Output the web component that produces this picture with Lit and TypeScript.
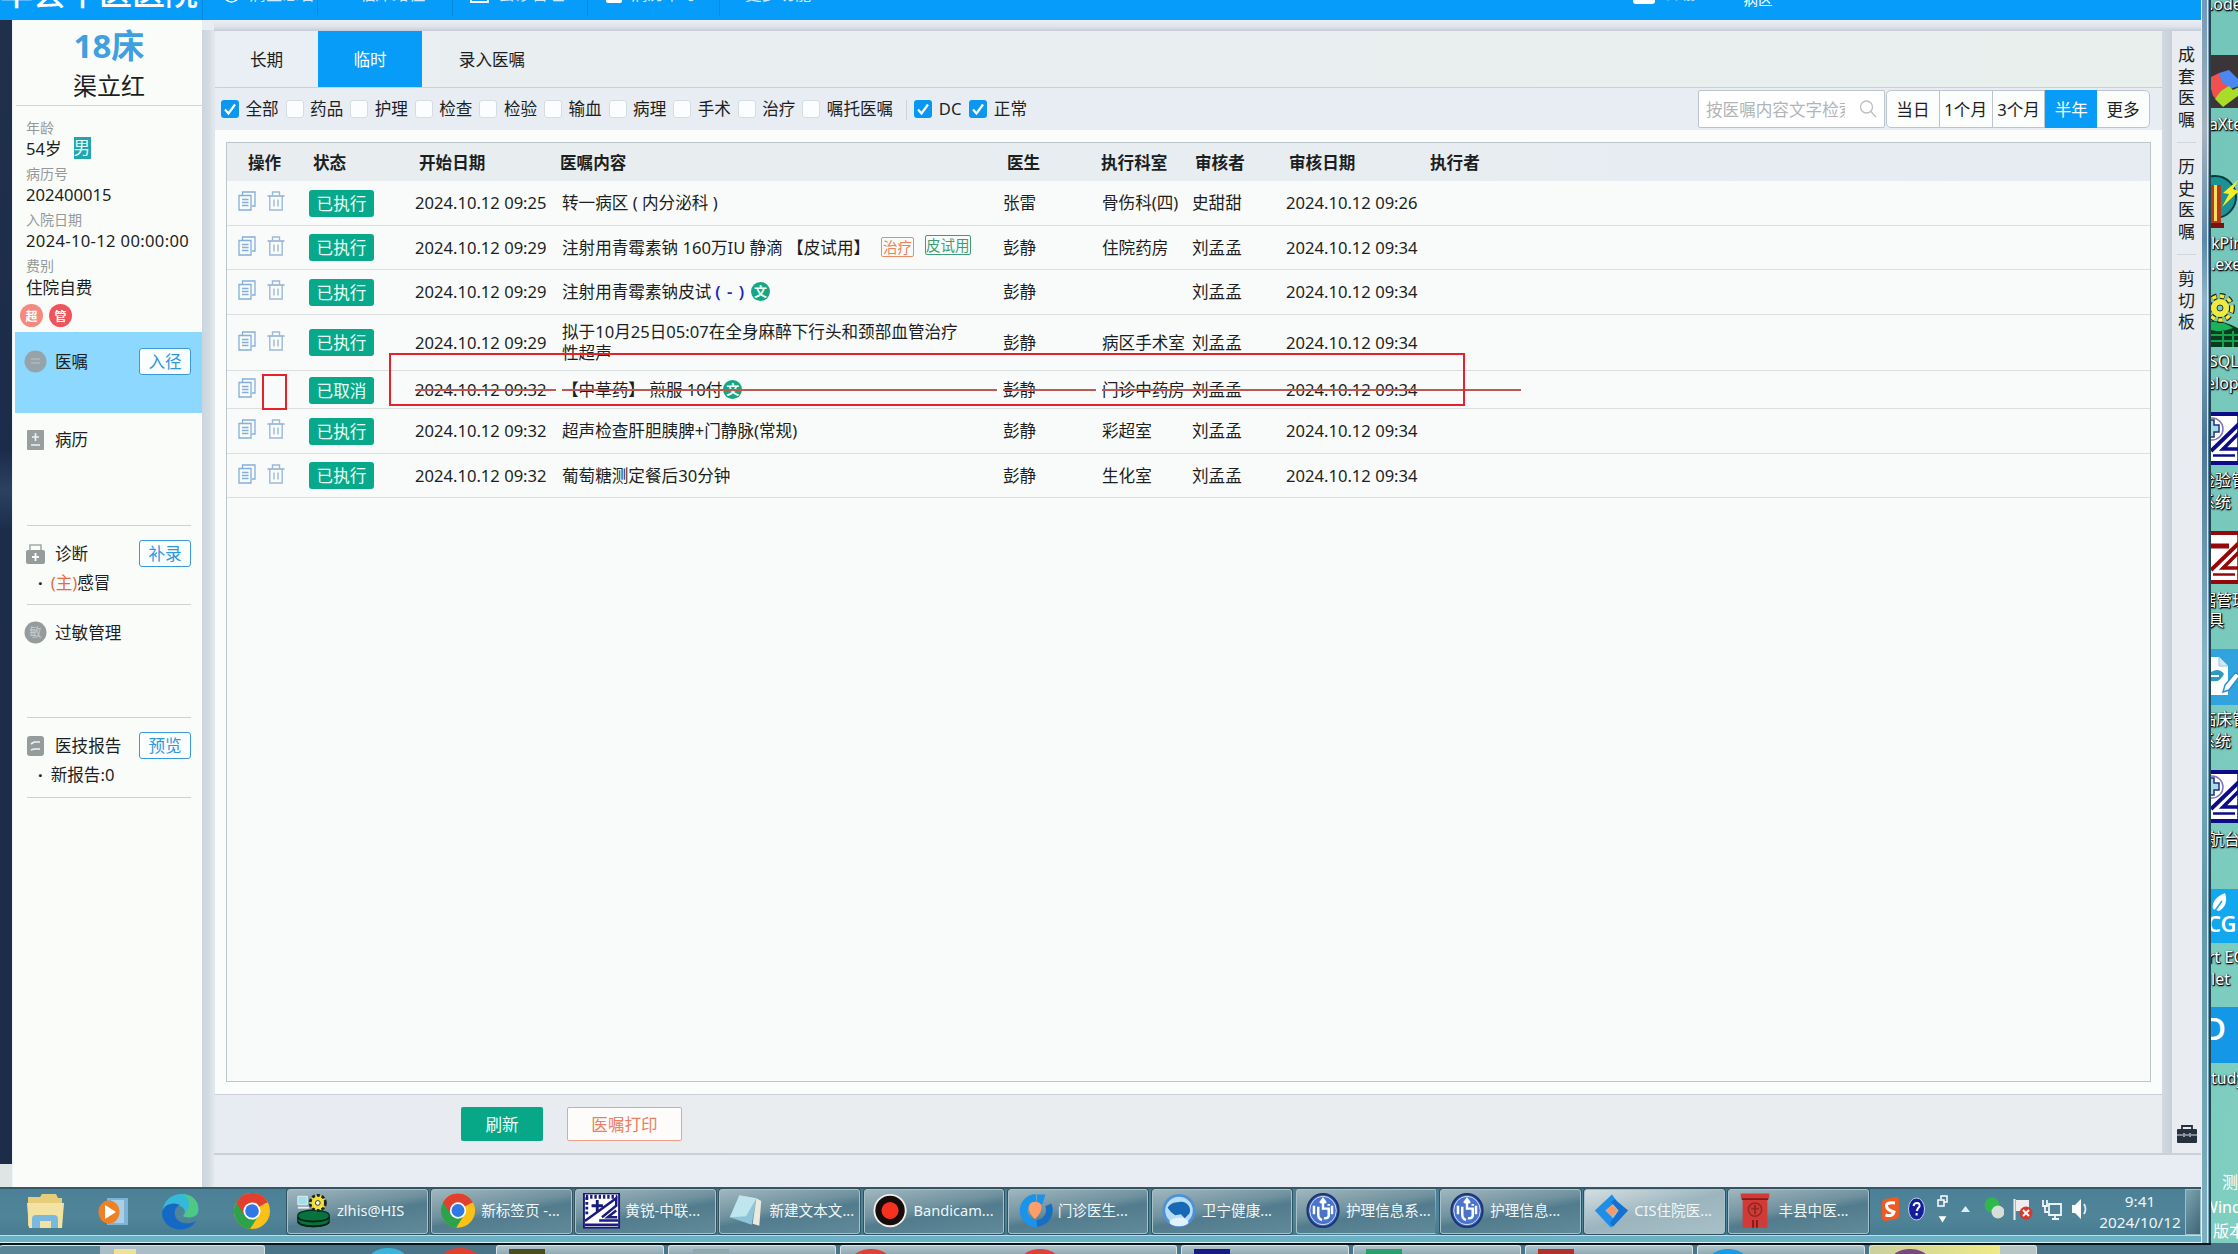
import { LitElement, html, css, svg, nothing } from "lit";
import { customElement } from "lit/decorators.js";
import { classMap } from "lit/directives/class-map.js";

type Order = {
  status: string; start: string; lines: string[]; doctor: string; dept: string;
  checker: string; checked: string; height: number;
  tags?: boolean; skin?: boolean; mark?: boolean; cancelled?: boolean;
};

const ORDERS: Order[] = [
  { status: "已执行", start: "2024.10.12 09:25", lines: ["转一病区 ( 内分泌科 )"], doctor: "张雷", dept: "骨伤科(四)", checker: "史甜甜", checked: "2024.10.12 09:26", height: 44.5 },
  { status: "已执行", start: "2024.10.12 09:29", lines: ["注射用青霉素钠 160万IU 静滴 【皮试用】"], tags: true, doctor: "彭静", dept: "住院药房", checker: "刘孟孟", checked: "2024.10.12 09:34", height: 44.5 },
  { status: "已执行", start: "2024.10.12 09:29", lines: ["注射用青霉素钠皮试"], skin: true, mark: true, doctor: "彭静", dept: "", checker: "刘孟孟", checked: "2024.10.12 09:34", height: 44.5 },
  { status: "已执行", start: "2024.10.12 09:29", lines: ["拟于10月25日05:07在全身麻醉下行头和颈部血管治疗", "性超声"], doctor: "彭静", dept: "病区手术室", checker: "刘孟孟", checked: "2024.10.12 09:34", height: 56.5 },
  { status: "已取消", start: "2024.10.12 09:32", lines: ["【中草药】 煎服 10付"], mark: true, cancelled: true, doctor: "彭静", dept: "门诊中药房", checker: "刘孟孟", checked: "2024.10.12 09:34", height: 38 },
  { status: "已执行", start: "2024.10.12 09:32", lines: ["超声检查肝胆胰脾+门静脉(常规)"], doctor: "彭静", dept: "彩超室", checker: "刘孟孟", checked: "2024.10.12 09:34", height: 44.5 },
  { status: "已执行", start: "2024.10.12 09:32", lines: ["葡萄糖测定餐后30分钟"], doctor: "彭静", dept: "生化室", checker: "刘孟孟", checked: "2024.10.12 09:34", height: 44.5 },
];

const chrome = svg`<circle cx="20" cy="18" r="18" fill="#fbc116"/>
  <path d="M20 18 L4.4 9 A18 18 0 0 1 35.6 9 Z" fill="#e2402f"/><path d="M4.4 9 A18 18 0 0 0 18 36 L27 22 L20 18Z" fill="#2ba24c"/><path d="M4.4 9 L12 22 L20 10 H35.6 A18 18 0 0 0 4.4 9Z" fill="#e2402f"/>
  <circle cx="20" cy="18" r="8.6" fill="#fff"/><circle cx="20" cy="18" r="6.8" fill="#2f78e6"/>`;
const zl = svg`<rect x="1" y="0" width="37" height="36" fill="#fff" stroke="#1a1a80" stroke-width="2"/>
  <path d="M3 3.500H36" stroke="#1a1a80" stroke-width="4" stroke-dasharray="2.500 2"/><path d="M4 4V22" stroke="#1a1a80" stroke-width="3" stroke-dasharray="3 2"/>
  <path d="M2 29 35 5V13L20 25M35 18 26 25H36M17 28.500H37M2 33H37" fill="none" stroke="#1a1a80" stroke-width="2.600"/>
  <path d="M15 7V19M9 13H21" stroke="#1a1a80" stroke-width="3"/>`;
const nurse = svg`<ellipse cx="20" cy="18" rx="16.5" ry="17.5" fill="#2f55b5" stroke="#1c3570" stroke-width="2"/><ellipse cx="20" cy="18" rx="14" ry="15" fill="#4a74cc" stroke="#dde8fa" stroke-width="1"/>
  <path d="M20 7V16H26V24Q25 27 21 26M17 10 20 6 23 10M15 14V22Q15 27 19 28M10.500 13V22M29.500 13V22M26 11V13" fill="none" stroke="#fff" stroke-width="2.600"/>`;
const gears = svg`<path d="M3 3h10v9H3z" fill="#9fe0ee" stroke="#eee"/><path d="M3 15h12" stroke="#eee" stroke-width="2"/>
  <path d="M3 23c0-7 33-7 33 0v6c0 8-33 8-33 0z" fill="#07743f" stroke="#032" stroke-width="1.4"/><path d="M3 25c3 6 30 6 33 0M3 30c3 6 30 6 33 0" fill="none" stroke="#021" stroke-width="2"/>
  <circle cx="24" cy="10" r="8" fill="#efe13a" stroke="#222" stroke-width="3" stroke-dasharray="3.2 2"/><circle cx="24" cy="10" r="6.5" fill="#efe13a"/><circle cx="24" cy="10" r="2.5" fill="#fff" stroke="#332"/>`;

const TASKS = [
  { text: "zlhis@HIS", icon: gears },
  { text: "新标签页 -...", icon: chrome },
  { text: "黄锐-中联...", icon: zl },
  { text: "新建文本文...", icon: svg`<path d="M13 2 31 5 26 33 3 25Z" fill="#8cc6d8"/><path d="M13 2 31 5 20 24 3 25Z" fill="#bfe6ee"/><path d="M31 5 36 8 34 34 27 32Z" fill="#eceade"/>` },
  { text: "Bandicam...", icon: svg`<circle cx="19" cy="18" r="17.5" fill="#f3eeea"/><circle cx="19" cy="18" r="15.5" fill="#150c0b"/><circle cx="19" cy="18" r="9" fill="#f5321f"/>` },
  { text: "门诊医生...", icon: svg`<path d="M21 4.500A13.500 13.500 0 1 0 22 31.500" fill="none" stroke="#1a93ea" stroke-width="8"/><path d="M34 12A14 14 0 0 1 22 31.500" fill="none" stroke="#166fc4" stroke-width="7"/><path d="M22 1H31L28 11H22Z" fill="#1a93ea"/><path d="M20 9c9-1 9 10 0 18-9-8-8-19 0-18z" fill="#ff9d6b"/>` },
  { text: "卫宁健康...", icon: svg`<circle cx="20" cy="18" r="17.5" fill="#4e91d6"/><circle cx="20" cy="18" r="14.5" fill="#b7dcf6"/><path d="M8 15c5-7 9-5 12-6 7-2 14 5 11 12l-5 5-4-4-6 1-4-3z" fill="#1768b5"/><ellipse cx="20" cy="30" rx="10" ry="4.5" fill="#e2f2fd"/>` },
  { text: "护理信息系...", icon: nurse },
  { text: "护理信息...", icon: nurse },
  { text: "CIS住院医...", icon: svg`<path d="M21 1 26 8 14 18 25 29 20 36 3 18Z" fill="#1e8ee8"/><path d="M24 6 38 18 22 35 19 31 28 18 20 9Z" fill="#1371cf"/><path d="M21 12 27 18 21 24 15 18Z" fill="#f69a6a"/>`, on: true },
  { text: "丰县中医...", icon: svg`<path d="M5 0H35V5H33V36H26V27H14V36H7V5H5Z" fill="#d33a36"/><path d="M14 27H26V36H14Z" fill="#d33a36"/><path d="M6 6H34M18 28V36M22 28V36" stroke="#7e1c1c" stroke-width="2"/><circle cx="20" cy="17" r="7" fill="none" stroke="#8d2a28" stroke-width="1.6"/><path d="M20 12V22M16 16H24" stroke="#8d2a28" stroke-width="2"/>` },
];

const copyIcon = html`<svg class="ico" width="18" height="20" viewBox="0 0 18 20" fill="none" stroke="#84aedb" stroke-width="1.3"><path d="M4.5 4V1H17V15H14"/><path d="M1 4.5H13V19H1Z"/><path d="M4 8.5H10.5M4 11.5H10.5M4 14.5H10.5" stroke-width="1.5"/></svg>`;
const trashIcon = html`<svg class="ico" width="18" height="20" viewBox="0 0 18 20" fill="none" stroke="#9db9d6" stroke-width="1.4"><path d="M0.5 5H17.5" stroke-width="1.8"/><path d="M5.5 4.5V1H12.5V4.5M2.8 5V19H15.2V5M7 8.5V15.5M11 8.5V15.5"/></svg>`;

@customElement("app-root")
export class AppRoot extends LitElement {
  static styles = css`
    :host { display: block; }
    * { box-sizing: border-box; }
    svg { display: block; flex: none; }
    .screen { position: relative; display: flex; flex-direction: column; width: 2238px; height: 1254px; overflow: hidden; background: #78cbbe;
      font-family: "Noto Sans", "Noto Sans CJK SC", sans-serif; font-size: 16.6px; line-height: 21px; color: #1b1f22; white-space: nowrap; }
    .main { display: flex; height: 1243px; flex: none; }
    .window { width: 2201px; display: flex; flex-direction: column; }
    .edge { width: 10px; height: 1243px; border-left: 1px solid #e9f3f6; border-right: 2px solid #24464f; background: linear-gradient(#7198b8, #a5b3bd 130px, #5c88aa 240px, #8fb4cb 300px, #4d7597 440px, #89b4c9 660px, #6297ac 900px, #7faebf); }
    .edge i { display: block; margin: 0 1px 0 auto; width: 1px; height: 100%; background: #d2edf4; }

    .top { height: 20px; flex: none; overflow: hidden; display: flex; background: #059cfa; color: #fff; }
    .brand { width: 203px; border-right: 1px solid #0788dd; font-size: 33px; line-height: 40px; margin-top: -27px; height: 47px; font-weight: 500; }
    .nav { height: 16px; border-right: 1px solid #0788dd; display: flex; gap: 9px; padding-left: 20px; line-height: 22px; }
    .nav span { margin-top: -17px; opacity: .8; }
    .nav svg { margin-top: -14px; }
    .account { margin-left: auto; width: 568px; display: flex; }
    .account .card { width: 22px; height: 16px; margin: -12px 11px 0 0; background: #fff; border-radius: 3px; }
    .account .who { width: 63px; margin-top: -18px; opacity: .7; }
    .account .ward { margin-top: -10px; font-size: 14.5px; line-height: 19px; width: 190px; }
    .account .dim { margin-top: -19px; letter-spacing: 28px; opacity: .5; }

    .body { flex: 1; min-height: 0; display: flex; background: #e7edf3; }
    .behind { width: 12px; background: linear-gradient(#20304a, #1b2c4a 430px, #2a4260 470px, #1c2d4a 510px, #1c2c49 1144px, #dfe5e4 1144px); }
    .side { width: 190px; background: #fafcfa; border-left: 1px solid #eef3f3; display: flex; flex-direction: column; }
    .bed { height: 86px; border-bottom: 1px solid #cfd6d6; margin-left: 3px; text-align: center; }
    .bed b { display: block; font-size: 33px; line-height: 40px; margin-top: 6px; color: #3f9fdf; }
    .bed span { font-size: 24px; line-height: 31px; margin-top: 4px; display: block; }
    .facts { height: 226px; padding: 12px 0 0 13px; }
    .facts .k { font-size: 14px; height: 20px; line-height: 20px; color: #95999b; }
    .facts .v { height: 26px; line-height: 21px; display: flex; gap: 12px; }
    .facts .t { letter-spacing: .33px; }
    .facts .pay { height: 28px; line-height: 23px; }
    .facts .sex { width: 17px; height: 22px; line-height: 22px; background: #22a5ae; color: #e7ffff; margin-top: -1px; }
    .marks { display: flex; gap: 6px; margin: 0 0 0 -6px; }
    .marks i { width: 23px; height: 23px; border-radius: 50%; background: #f4897f; color: #fff; font: bold 12px/23px "Noto Sans CJK SC", sans-serif; text-align: center; }
    .marks i + i { background: #ee5459; }
    .item { padding: 16px 0 0 12px; margin-left: 2px; flex: none; }
    .item.on { background: #8dd8fe; height: 81px; }
    .rec { height: 113px; } .dia { height: 79px; } .alg { height: 113px; } .rep { height: 80px; }
    .item .row { display: flex; align-items: center; height: 27px; }
    .item .row span { flex: 1; }
    .item .row svg { margin-right: 8px; margin-left: -3px; }
    .item.ln { display: flex; flex-direction: column; padding-bottom: 0; }
    .item.ln .rule { height: 1px; background: #cdd1d1; margin: auto 11px 0 0; }
    .item.rec { padding-top: 14px; }
    .item.dia, .item.alg, .item.rep { padding-top: 14px; }
    .mini { width: 52px; height: 27px; margin-right: 11px; border: 1.5px solid #3a9ad8; border-radius: 3px; background: #fbfeff; color: #2f97dc; text-align: center; line-height: 25px; }
    .sub { padding-left: 11px; margin-top: 5px; height: 21px; display: flex; gap: 8px; }
    .sub em { font-style: normal; color: #ea6a3e; }

    .gutter { width: 12px; background: linear-gradient(90deg, #c9d5de, #d4dce3 60%, #e3e8ed); margin-top: 10px; height: 1157px; }
    .work { flex: 1; min-width: 0; display: flex; flex-direction: column; }
    .shade { height: 11px; background: linear-gradient(#ebeef2, #dfe3eb 60%, #c5ccd8); }
    .cols { display: flex; height: 1124px; border-bottom: 2px solid #c8d0d9; }
    .panel { width: 1948px; display: flex; flex-direction: column; background: #fafdfc; border-left: 1px solid #dfe6ec; }
    .tabs { height: 57px; display: flex; background: linear-gradient(90deg, #e9eff6, #e9eef1 240px, #e8efed); border-bottom: 1px solid #c2d2de; line-height: 57px; text-align: center; }
    .tabs div { width: 103px; }
    .tabs .on { width: 104px; background: #069cf8; color: #fff; }
    .tabs .add { width: 140px; }
    .filters { height: 42px; display: flex; align-items: flex-start; background: #e8edf4; padding: 2px 12px 0 6px; }
    .ck { display: flex; gap: 6.5px; width: 64.6px; padding-top: 10px; line-height: 18px; }
    .ck i, .ck svg { width: 18px; height: 18px; border-radius: 3px; background: #fbfdfe; border: 1px solid #d5dde2; flex: none; }
    .ck svg { background: #0a97f2; border: 0; }
    .ck.long { width: 105px; }
    .ck.dc { width: 55px; }
    .bar { width: 1px; height: 20px; margin: 10px 7px 0 -1px; background: #cbd3da; }
    .find { margin-left: auto; width: 187px; height: 38px; border: 1px solid #bcc5cb; border-radius: 2px; background: #fff; display: flex; align-items: center; padding: 0 7px; gap: 14px; color: #b1b5b8; }
    .find span { width: 140px; overflow: hidden; }
    .range { display: flex; height: 38px; margin-left: 1px; border: 1px solid #bcc5cb; border-radius: 5px; background: #fcfdfd; line-height: 37px; text-align: center; width: 264px; }
    .range div { flex: 1; border-right: 1px solid #bcc5cb; }
    .range .on { background: #069cf8; color: #fff; margin: -1px 0; line-height: 39px; border: 0; }
    .range div:last-child { border: 0; }

    .table { margin: 12px 11px 12px 11px; flex: 1; min-height: 0; border: 1px solid #bcc7c9; background: #f9fbfa; }
    .tr { display: grid; grid-template-columns: 82px 106px 147px 441px 99px 90px 94px 235px 1fr; border-bottom: 1px solid #dadfe0; align-items: center; }
    .head { height: 38px; background: linear-gradient(90deg, #e9edf0, #e8edf1 50%, #e7ecf3); font-weight: 700; border: 0; }
    .head > div { padding-left: 3px; }
    .head > div:nth-child(1) { padding-left: 21px; }
    .head > div:nth-child(2) { padding-left: 4px; }
    .head > div:nth-child(3) { padding-left: 4px; }
    .head > div:nth-child(4) { padding-left: 0; margin-left: -2px; }
    .head > div:nth-child(6) { margin-left: -4px; }
    .head > div:nth-child(5) { padding-left: 4px; }
    .ops { display: flex; gap: 11px; padding-left: 11px; margin-top: -3px; }
    .st { width: 65px; height: 27px; border-radius: 3px; background: #08a98a; color: #eafff8; text-align: center; line-height: 27px; margin-top: 1px; }
    .cell { position: relative; line-height: 21.5px; }
    .content { display: flex; align-items: center; }
    .strike::after { content: ""; position: absolute; left: 0; right: 6px; top: 10px; height: 2px; background: #bf5752; }
    .strike.flush::after { right: 0; }
    .tag { font-size: 14.5px; line-height: 18px; height: 20px; border: 1px solid #ec8a68; color: #ec8058; border-radius: 2px; margin-left: 11px; padding: 0 1px; margin-top: -1px; }
    .tag.green { border-color: #3f9c76; color: #3f9c76; margin-left: 11px; margin-top: -4px; padding: 0; }
    .neg { color: #1d23c8; font-weight: 600; margin: 0 6px 0 4px; word-spacing: 2px; }
    .wen { width: 19px; height: 19px; border-radius: 50%; background: #17a583; color: #eafff8; font: bold 13px/18px "Noto Sans CJK SC", sans-serif; text-align: center; margin-left: 1px; }
    .foot { height: 59px; border-top: 1px solid #cbd1d6; background: linear-gradient(90deg, #e7ebf2, #e9edef 30%, #eaedef); display: flex; padding: 12px 0 0 246px; gap: 24px; text-align: center; }
    .btn { width: 82px; height: 34px; border-radius: 2px; background: #06a888; color: #f0fffa; line-height: 35px; }
    .btn.line { width: 115px; background: #fdfcfa; border: 1.5px solid #efa18c; color: #ea7f62; line-height: 33px; }
    .gut2 { width: 10px; background: linear-gradient(90deg, #d3d9e0, #c8cfd9); }
    .rail { width: 29px; background: #e9edf1; display: flex; flex-direction: column; align-items: center; font-size: 17px; }
    .rail div { width: 19px; white-space: normal; line-height: 21.7px; padding: 13px 1px 12px; text-align: center; height: 112px; border-bottom: 1px solid #d0d7dd; word-break: break-all; }
    .rail div:nth-child(3) { border: 0; }
    .rail svg { margin: auto 0 10px; }

    .tasks { height: 48px; flex: none; display: flex; border-top: 2px solid #355866; background: linear-gradient(#4c8097, #4f8499 60%, #467b90); color: #eef6f8; }
    .quick { width: 287px; flex: none; display: flex; align-items: center; padding: 0 16px 2px 26px; justify-content: space-between; }
    .task { width: 140.5px; flex: none; height: 45px; margin-right: 3.65px; display: flex; align-items: center; gap: 4px; padding-left: 7px; border: 1px solid #a7c1ca; border-radius: 3px; box-shadow: 0 0 0 1px #32525f; background: linear-gradient(170deg, #a0b6be, #6f919e 42%, #527c8d 55%, #61899a); font-size: 14.6px; padding-bottom: 2px; }
    .task svg { width: 38px; height: 36px; }
    .task.join { border-right-color: transparent; box-shadow: none; border-radius: 3px 0 0 3px; }
    .task.on { background: linear-gradient(165deg, #d3dfe2, #9bb4bd 50%, #a8c1c8); }
    .tray { display: flex; align-items: center; flex: 1; min-width: 0; padding: 0 0 6px 9px; gap: 9px; font-size: 15.3px; }
    .clock { margin-left: auto; width: 86px; text-align: center; line-height: 21px; padding-top: 6px; }
    .show { width: 16px; height: 46px; margin: 5px 0 0 -7px; border: 1px solid #9dbcc6; background: linear-gradient(120deg, #7ea4b1, #3c6577); }
    .rim { height: 8px; flex: none; background: #6bb0c3; border-top: 1px solid #bfdee5; border-bottom: 1px solid #d9f0f5; }

    .under { height: 11px; flex: none; display: flex; border-top: 2px solid #08151a; background: #4a7488; overflow: hidden; gap: 4px; }
    .under div { width: 168px; flex: none; background: linear-gradient(#b1c4ca, #8faab4); border: 1px solid #d5e2e6; border-bottom: 0; border-radius: 3px 3px 0 0; padding: 3px 0 0 12px; }
    .under div i { display: block; width: 36px; height: 20px; border-radius: 50% 50% 0 0; }
    .under .first { width: 265px; background: linear-gradient(90deg, #5a8597 100px, #a9bec6 100px); border-left: 0; padding-left: 114px; }
    .under .plain { width: 223px; background: none; border: 0; display: flex; gap: 36px; padding-left: 101px; }
    .under .wide { width: 337px; display: flex; gap: 133px; }
    .under .sq i { border-radius: 0; }
    .under .yel { background: linear-gradient(90deg, #c9cf9e, #eeea86 130px, #b9c6c6 130px); }

    .desk { position: absolute; left: 2211px; top: 0; width: 27px; height: 1254px; overflow: hidden; color: #fff; text-shadow: 1px 1px 1px #000, 0 1px 2px #000, 1px 0 1px #234; font-size: 16px; background: linear-gradient(100deg, #72c5b9, #80cfc1); border-bottom: 11px solid #4a7488; }
    .desk span, .desk svg { position: absolute; left: 0; }
    .desk .soft { text-shadow: none; }
    .hint { position: absolute; border: 2px solid #e8202a; }
    .hint.a { left: 389px; top: 353px; width: 1076px; height: 53px; }
    .hint.b { left: 262px; top: 374px; width: 25px; height: 36px; }
  `;

  private row(o: Order) {
    const cls = (flush = false) => classMap({ cell: true, strike: !!o.cancelled, flush });
    return html`<div class="tr" style="height:${o.height}px">
      <div class="ops">${copyIcon}${o.cancelled ? nothing : trashIcon}</div>
      <div><div class="st">${o.status}</div></div>
      <div class=${cls()}>${o.start}</div>
      <div class=${cls()}><div class="content"><div>${o.lines.map((l) => html`<div>${l}</div>`)}</div>
        ${o.tags ? html`<div class="tag">治疗</div><div class="tag green">皮试用</div>` : nothing}
        ${o.skin ? html`<span class="neg">( - )</span>` : nothing}
        ${o.mark ? html`<div class="wen">文</div>` : nothing}</div></div>
      <div class=${cls()}>${o.doctor}</div>
      <div class=${cls(true)}>${o.dept || "\u00a0"}</div>
      <div class=${cls(true)}>${o.checker}</div>
      <div class=${cls(true)}>${o.checked}</div>
      <div></div>
    </div>`;
  }

  private check(text: string, on = false, extra = "") {
    return html`<div class="ck ${extra}">${on
      ? html`<svg viewBox="0 0 18 18" fill="none"><path d="M4 9.5 7.5 13.5 14 4.5" stroke="#fff" stroke-width="2.2"/></svg>`
      : html`<i></i>`}<span>${text}</span></div>`;
  }

  private label(y: number, text: string, x = 0, soft = false) {
    return html`<span class=${soft ? "soft" : ""} style="top:${y - 11}px;left:${x}px">${text}</span>`;
  }

  private zicon(y: number, c: string, plus: boolean) {
    return html`<svg style="top:${y}px" width="28" height="53" viewBox="0 0 28 53"><rect width="28" height="53" fill="#fff"/><path d="M0 2H28M0 51H28" stroke=${c} stroke-width="4"/><path d="M27 0V53" stroke=${c} stroke-width="1.5"/>
      <path d="M0 39 28 12" stroke=${c} stroke-width="4"/><path d="M28 21 12 37H28" fill="none" stroke=${c} stroke-width="3.500"/><path d="M2 43.500H24" stroke=${c} stroke-width="2.500"/>
      ${plus ? svg`<circle cx="1" cy="17" r="11" fill="#fff" stroke="#7c78b8" stroke-width="1.5"/><path d="M0 8H3V13H8V20H3V25H0" fill="#a4dce8" stroke="#203080" stroke-width="1.5"/>` : svg`<path d="M0 15H18" stroke=${c} stroke-width="5"/>`}</svg>`;
  }

  render() {
    return html`<div class="screen">
      <div class="main">
        <div class="window">
          <div class="top">
            <div class="brand">丰县中医医院</div>
            <div class="nav" style="width:115px"><svg width="17" height="17" viewBox="0 0 17 17" fill="none" stroke="#fff" stroke-width="1.6"><circle cx="8.5" cy="8.5" r="7.5"/></svg><span>病区患者</span></div>
            <div class="nav" style="width:135px"><span>＋ 临床路径</span></div>
            <div class="nav" style="width:135px;padding-left:17px"><svg width="19" height="17" viewBox="0 0 19 17" fill="none" stroke="#fff" stroke-width="1.8"><path d="M1 1H18V16H1ZM5 7H14M5 11H14"/></svg><span>会诊管理</span></div>
            <div class="nav" style="width:132px;padding-left:18px"><svg width="16" height="17" viewBox="0 0 16 17"><rect width="16" height="17" rx="2" fill="#fff"/></svg><span>病历书写</span></div>
            <div class="nav" style="border:0;padding-left:25px"><span>更多功能</span></div>
            <div class="account"><div class="card"></div><div class="who">彭静</div><div class="ward">一病区</div><div class="dim">设置消息退出</div></div>
          </div>

          <div class="body">
            <div class="behind"></div>
            <div class="side">
              <div class="bed"><b>18床</b><span>渠立红</span></div>
              <div class="facts">
                <div class="k">年龄</div><div class="v">54岁<span class="sex">男</span></div>
                <div class="k">病历号</div><div class="v">202400015</div>
                <div class="k">入院日期</div><div class="v t">2024-10-12 00:00:00</div>
                <div class="k">费别</div><div class="v pay">住院自费</div>
                <div class="marks"><i>超</i><i>管</i></div>
              </div>
              <div class="item on"><div class="row"><svg width="23" height="23" viewBox="0 0 23 23"><circle cx="11.5" cy="11.5" r="11" fill="#96a3a8"/><path d="M7 9H16M7 13H16" stroke="#a9b4b8" stroke-width="2"/></svg><span>医嘱</span><div class="mini">入径</div></div></div>
              <div class="item rec ln"><div class="row" style="margin-top:-1px"><svg width="23" height="20" viewBox="0 0 23 20"><rect x="3" width="17" height="20" rx="1" fill="#999f9f"/><path d="M11.5 3V11M8 7H15M7 15H16" stroke="#f0f2f2" stroke-width="1.6"/></svg><span>病历</span></div><div class="rule"></div></div>
              <div class="item dia ln"><div class="row"><svg width="23" height="20" viewBox="0 0 23 20"><path d="M6 6V1H17V6" fill="none" stroke="#a5aaaa" stroke-width="1.6"/><rect x="2" y="6" width="19" height="14" rx="2" fill="#969c9c"/><path d="M11.5 9V17M8 13H15" stroke="#fff" stroke-width="1.8"/></svg><span>诊断</span><div class="mini">补录</div></div><div class="sub"><b>·</b><div><em>(主)</em>感冒</div></div><div class="rule"></div></div>
              <div class="item alg ln"><div class="row"><svg width="23" height="23" viewBox="0 0 23 23"><circle cx="11.5" cy="11.5" r="11" fill="#969c9c"/><text x="5.5" y="15.5" font-size="12" fill="#c9cdcd">敏</text></svg><span>过敏管理</span></div><div class="rule"></div></div>
              <div class="item rep ln"><div class="row"><svg width="23" height="20" viewBox="0 0 23 20"><rect x="3" width="17" height="20" rx="3" fill="#969c9c"/><path d="M7 8 10 6 16 6M7 14 10 13 16 13" stroke="#f0f2f2" stroke-width="1.6" fill="none"/></svg><span>医技报告</span><div class="mini">预览</div></div><div class="sub"><b>·</b><div>新报告:0</div></div><div class="rule"></div></div>
            </div>
            <div class="gutter"></div>
            <div class="work">
              <div class="shade"></div>
              <div class="cols">
                <div class="panel">
                  <div class="tabs"><div>长期</div><div class="on">临时</div><div class="add">录入医嘱</div></div>
                  <div class="filters">
                    ${this.check("全部", true)}${["药品", "护理", "检查", "检验", "输血", "病理", "手术", "治疗"].map((t) => this.check(t))}
                    ${this.check("嘱托医嘱", false, "long")}<div class="bar"></div>${this.check("DC", true, "dc")}${this.check("正常", true)}
                    <div class="find"><span>按医嘱内容文字检索</span><svg width="18" height="18" viewBox="0 0 18 18" fill="none" stroke="#b9bfc3" stroke-width="1.3"><circle cx="7.5" cy="7" r="6"/><path d="M11.8 11.5 17 17"/></svg></div>
                    <div class="range"><div>当日</div><div>1个月</div><div>3个月</div><div class="on">半年</div><div>更多</div></div>
                  </div>
                  <div class="table">
                    <div class="tr head">${["操作", "状态", "开始日期", "医嘱内容", "医生", "执行科室", "审核者", "审核日期"].map((t) => html`<div>${t}</div>`)}<div style="margin-left:-94px">执行者</div></div>
                    ${ORDERS.map((o) => this.row(o))}
                  </div>
                  <div class="foot"><div class="btn">刷新</div><div class="btn line">医嘱打印</div></div>
                </div>
                <div class="gut2"></div>
                <div class="rail"><div>成套医嘱</div><div>历史医嘱</div><div>剪切板</div>
                  <svg width="20" height="18" viewBox="0 0 20 18"><path d="M5 5V1H15V5" fill="none" stroke="#27313d" stroke-width="1.8"/><rect y="4" width="20" height="14" rx="1" fill="#27313d"/><path d="M0 10H6M8 10H12M14 10H20M7 8V12M13 8V12" stroke="#d9e0e6" stroke-width="1.2"/></svg></div>
              </div>
            </div>
          </div>

          <div class="tasks">
            <div class="quick">
              <svg width="39" height="35" viewBox="0 0 39 35"><path d="M2 3H14L16 0H30L32 4H36V32H2Z" fill="#e6cd7a"/><path d="M1 9H38L36 34H3Z" fill="#f3e3a3"/><path d="M6 34V25Q6 21 10 21H28Q32 21 32 25V34H25V27H14V34Z" fill="#79b9e0"/></svg>
              <svg width="31" height="27" viewBox="0 0 31 27"><rect x="9" width="21" height="27" fill="#7db3d6"/><rect x="13" y="2" width="13" height="23" fill="#a9d0e8"/><ellipse cx="11" cy="14" rx="10.5" ry="11.5" fill="#ee8124"/><path d="M7 7 18 14 7 21Z" fill="#fff"/></svg>
              <svg width="38" height="37" viewBox="0 0 38 37"><path d="M2 22C0 5 15 0 22 1 32 2 39 9 37 19 36 24 28 26 22 23 27 17 21 12 14 13 8 14 3 19 2 22Z" fill="#35b9d8"/><path d="M22 1C32 2 39 9 37 19 36 24 28 26 22 23 30 16 30 6 22 1Z" fill="#4ec983"/><path d="M1 20C2 12 11 8 19 12 12 14 11 27 22 30 27 31 32 30 35 28 31 35 22 38 15 36 6 34 1 27 1 20Z" fill="#1469c4"/></svg>
              <svg width="39" height="37" viewBox="0 0 39 37">${chrome}</svg>
            </div>
            ${TASKS.map((t, i) => html`<div class="task ${classMap({ on: !!t.on, join: i === 7 })}"><svg viewBox="0 0 40 37">${t.icon}</svg><span>${t.text}</span></div>`)}
            <div class="tray">
              <svg width="17" height="24" viewBox="0 0 17 24"><path d="M3 2 14 0Q17 0 17 4V18Q17 21 14 22L4 24Q0 24 0 20V6Q0 3 3 2Z" fill="#ee5a22"/><path d="M13 6Q4 5 4.500 9T12 15Q11 20 3.500 18" fill="none" stroke="#fff" stroke-width="3"/></svg>
              <svg width="17" height="24" viewBox="0 0 17 24"><ellipse cx="8.500" cy="12" rx="8" ry="11" fill="#141c9a" stroke="#c3cfef"/><path d="M5.500 9Q6 6 9 6T11.500 9.500Q9 12 8.700 14M8.600 16V18.500" fill="none" stroke="#fff" stroke-width="2"/></svg>
              <svg width="18" height="34" viewBox="0 0 18 34" fill="none" stroke="#fff" stroke-width="1.500"><path d="M4 8H10V14H4ZM7 7V4H13V10H10"/><path d="M6 25H11L8.500 29Z" fill="#fff"/></svg>
              <svg width="14" height="10" viewBox="0 0 14 10"><path d="M0 8 4.500 2 9 8Z" fill="#d7f0fa"/></svg>
              <svg width="20" height="24" viewBox="0 0 20 24"><circle cx="8" cy="8" r="7.500" fill="#30b84e"/><circle cx="14" cy="15" r="6.500" fill="#d7ded8"/></svg>
              <svg width="20" height="24" viewBox="0 0 20 24"><path d="M1.500 2V23" stroke="#eee" stroke-width="2"/><path d="M3 3H16V14H3Z" fill="#eee"/><circle cx="13" cy="16" r="6.500" fill="#d8382c"/><path d="M10 13 16 19M16 13 10 19" stroke="#fff" stroke-width="2"/></svg>
              <svg width="20" height="24" viewBox="0 0 20 24" fill="none" stroke="#eef5f7" stroke-width="1.800"><path d="M7 7H19V18H7ZM10 22H17M13 18V22M1 3V9H5V3M3 9V15H7"/></svg>
              <svg width="17" height="24" viewBox="0 0 17 24"><path d="M1 8H4L10 2V22L4 16H1Z" fill="#fff"/><path d="M13 7Q16 12 13 17" fill="none" stroke="#dfeef3" stroke-width="1.800"/></svg>
              <div class="clock">9:41<br />2024/10/12</div><div class="show"></div>
            </div>
          </div>
          <div class="rim"></div>
        </div>
        <div class="edge"><i></i></div>
      </div>
      <div class="under">
        <div class="first sq"><i style="background:#efe39a;width:22px"></i></div><div class="plain"><i style="background:#39b5dc"></i><i style="background:#e2402f"></i></div>
        <div class="sq"><i style="background:#4b4d20"></i></div><div class="sq"><i style="background:#8ea8ad;margin-left:12px"></i></div>
        <div class="wide"><i style="background:#e0403a"></i><i style="background:#e0403a"></i></div>
        <div class="sq"><i style="background:#151a86"></i></div><div class="sq"><i style="background:#2ca06c"></i></div><div class="sq"><i style="background:#b0302f"></i></div>
        <div><i style="background:#1d9ae2"></i></div><div class="yel"><i style="background:#7c4682;margin-left:10px"></i></div>
      </div>

      <div class="desk">
        ${this.label(5, ".ode", -2)}
        <svg style="top:55px" width="28" height="53" viewBox="0 0 28 53"><rect width="28" height="53" fill="#3c3538"/><path d="M0 22 8 18 13 26 20 32 11 50 2 41 0 34Z" fill="#f0504f"/><path d="M8 18 18 15 28 25V31L19 34 11 27Z" fill="#4c86f0"/><path d="M10 36 18 31 22 35 28 32V40L12 52 4 44Z" fill="#a8dc28"/></svg>
        ${this.label(125, "aXte", -2)}
        <svg style="top:173px" width="28" height="56" viewBox="0 0 28 56"><circle cx="4" cy="24" r="21" fill="#1a9296" stroke="#063b40" stroke-width="2"/><path d="M0 12H10V50H0Z" fill="#b43a1c"/><path d="M3 12H6V48H3Z" fill="#f4e05c"/><path d="M0 50H13V55H0Z" fill="#7c1210"/><path d="M28 6 12 20 18 21 11 34 28 18 22 16Z" fill="#f4ee2a"/></svg>
        ${this.label(244, "kPin", 0)}${this.label(265, ".exe", 0)}
        <svg style="top:293px" width="28" height="56" viewBox="0 0 28 56"><path d="M0 28Q16 28 28 36V54H0Z" fill="#063d1f"/><path d="M0 29Q14 28 22 35 10 40 0 37Z" fill="#18b45c"/><path d="M0 42H28M0 48H28M12 38V54M22 38V54" stroke="#16a050" stroke-width="2"/><circle cx="9" cy="15" r="12" fill="none" stroke="#22220a" stroke-width="6" stroke-dasharray="5 3"/><circle cx="9" cy="15" r="12" fill="none" stroke="#f0ea3c" stroke-width="3.500" stroke-dasharray="4.500 3.500"/><circle cx="9" cy="15" r="9" fill="#f0ea3c"/><circle cx="9" cy="15" r="3" fill="#78cbbe" stroke="#333"/></svg>
        ${this.label(362, "SQL", -2)}${this.label(384, "elop", -5)}
        ${this.zicon(412, "#0c0c88", true)}${this.label(481, "检验管", -12)}${this.label(503, "系统", -12)}
        ${this.zicon(531, "#960808", false)}${this.label(601, "据管理", -11)}${this.label(621, "具", -3)}
        <svg style="top:649px" width="28" height="56" viewBox="0 0 28 56"><rect width="28" height="56" fill="#31a4df"/><path d="M0 8H8L17 17V46H0Z" fill="#fff"/><path d="M8 8V17H17" fill="#cfe8f5" stroke="#8cc8e6"/><path d="M0 23Q8 18 13 25 9 34 0 32Z" fill="#2e9ac0"/><path d="M0 27H8" stroke="#fff" stroke-width="2"/><path d="M14 36 24 24Q28 24 28 28L18 41 12 43Z" fill="#fff" stroke="#2b92cc" stroke-width="1.500"/></svg>
        ${this.label(720, "临床管", -11)}${this.label(742, "系统", -12)}
        ${this.zicon(770, "#0c0c88", true)}${this.label(840, "航台", -3)}
        <svg style="top:889px" width="28" height="54" viewBox="0 0 28 54"><rect width="28" height="54" fill="#12a8f0"/><path d="M2 20Q0 10 14 4 18 16 8 22Z" fill="#fff"/><path d="M3 23 11 12" stroke="#12a8f0" stroke-width="1.500"/><text x="-4" y="43" font-size="22" fill="#fff" font-weight="600" style="text-shadow:none">CG</text></svg>
        ${this.label(958, "rt EC", -3)}${this.label(980, "let", 0)}
        <svg style="top:1007px" width="28" height="56" viewBox="0 0 28 56"><rect width="28" height="56" fill="#1597e8"/><text x="-7" y="33" font-size="30" font-weight="600" fill="#fff" style="text-shadow:none">D</text></svg>
        ${this.label(1079, "tudy", 0)}${this.label(1183, "测试", 11, true)}${this.label(1208, "Wind", -8, true)}${this.label(1232, "版本", 2, true)}
      </div>
      <div class="hint a"></div><div class="hint b"></div>
    </div>`;
  }
}
